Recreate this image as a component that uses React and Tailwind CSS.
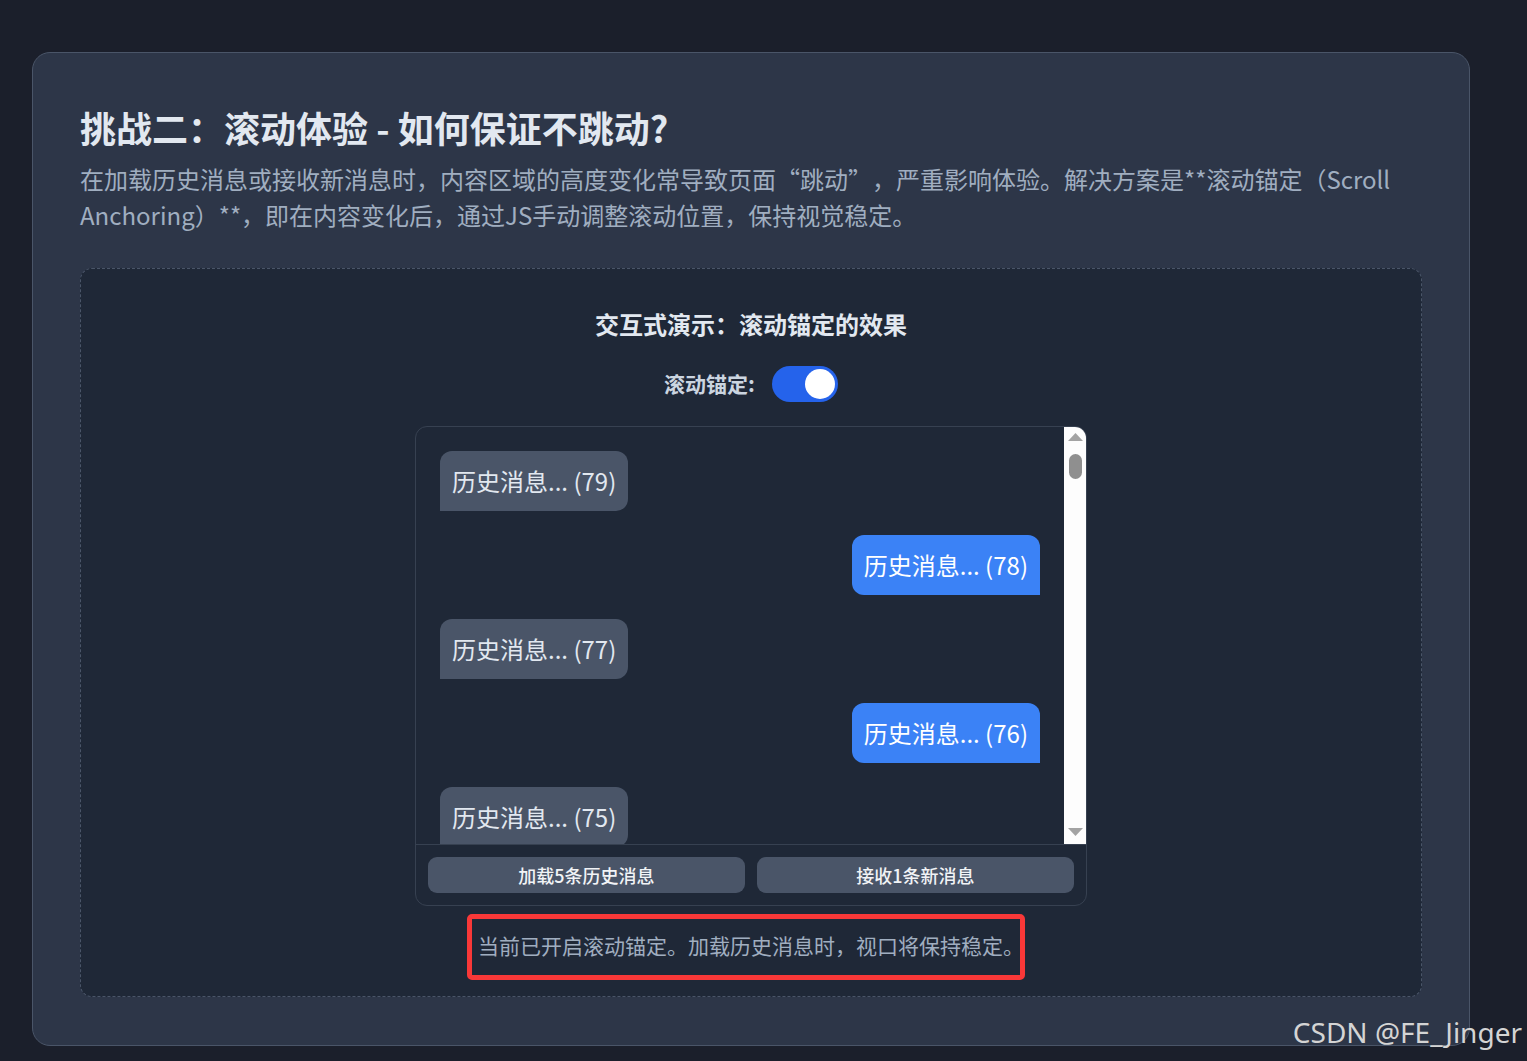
import React, { useState } from 'react';

const messages = [79, 78, 77, 76, 75];

function Bubble({ n }) {
  const mine = n % 2 === 0;
  return (
    <div className={mine ? 'flex justify-end' : 'flex justify-start'}>
      <div
        className={
          mine
            ? 'bg-[#3b82f6] text-white text-[24px] leading-[36px] px-3 py-3 rounded-[12px] rounded-br-none'
            : 'bg-[#4a5568] text-[#e2e8f0] text-[24px] leading-[36px] px-3 py-3 rounded-[12px] rounded-bl-none'
        }
      >
        历史消息... ({n})
      </div>
    </div>
  );
}

function FakeScrollbar() {
  return (
    <div className="w-[22px] shrink-0 bg-[#fdfdfd] flex flex-col items-center pt-[6px] pb-[8px]">
      <svg width="15" height="8" viewBox="0 0 15 8">
        <polygon points="7.5,0 15,8 0,8" fill="#a3a3a3" />
      </svg>
      <div className="mt-[13px] w-[13px] h-[25px] rounded-full bg-[#8f8f8f]" />
      <div className="flex-1" />
      <svg width="15" height="8" viewBox="0 0 15 8">
        <polygon points="0,0 15,0 7.5,8" fill="#a3a3a3" />
      </svg>
    </div>
  );
}

export default function App() {
  const [anchored, setAnchored] = useState(true);

  return (
    <div
      className="relative h-[1061px] bg-[#1b1f2b] pt-[52px] pl-[32px] pr-[57px] overflow-hidden [text-spacing-trim:space-all]"
      style={{ fontFamily: '"Noto Sans CJK SC", "Noto Sans", sans-serif' }}
    >
      <div className="bg-[#2d3648] border border-[#4a5568] rounded-[18px] px-[47px] pt-[50px] pb-[48px]">
        <h2 className="text-[36px] leading-[48px] font-bold text-[#e2e8f0]">
          挑战二：滚动体验 - 如何保证不跳动?
        </h2>
        <p className="mt-[10px] text-[24px] leading-[36px] text-[#a0aec0]">
          在加载历史消息或接收新消息时，内容区域的高度变化常导致页面“跳动”，严重影响体验。解决方案是**滚动锚定（Scroll Anchoring）**，即在内容变化后，通过JS手动调整滚动位置，保持视觉稳定。
        </p>

        <div className="mt-[35px] bg-[#1f2837] border border-dashed border-[#4a5568] rounded-[12px] pt-[37px] pb-[35px] flex flex-col items-center">
          <h3 className="text-[24px] leading-[36px] font-bold text-[#e2e8f0]">
            交互式演示：滚动锚定的效果
          </h3>

          <div className="mt-[24px] flex items-center gap-[17px]">
            <span className="text-[21px] font-semibold text-[#cbd5e0]">滚动锚定:</span>
            <button
              onClick={() => setAnchored(!anchored)}
              className={
                anchored
                  ? 'w-[66px] h-[36px] rounded-full bg-[#2563eb] flex items-center justify-end pr-[3px]'
                  : 'w-[66px] h-[36px] rounded-full bg-[#4a5568] flex items-center justify-start pl-[3px]'
              }
            >
              <span className="w-[30px] h-[30px] rounded-full bg-white block" />
            </button>
          </div>

          <div className="mt-[24px] w-[672px] border border-[#374151] rounded-[12px] overflow-hidden">
            <div className="h-[417px] flex">
              <div className="flex-1 overflow-hidden p-6 flex flex-col gap-6">
                {messages.map((n) => (
                  <Bubble key={n} n={n} />
                ))}
              </div>
              <FakeScrollbar />
            </div>
            <div className="border-t border-[#374151] p-3 flex gap-3">
              <button className="flex-1 h-[36px] rounded-[9px] bg-[#4a5568] text-[18px] leading-[24px] font-medium text-[#f1f3f6]">
                加载5条历史消息
              </button>
              <button className="flex-1 h-[36px] rounded-[9px] bg-[#4a5568] text-[18px] leading-[24px] font-medium text-[#f1f3f6]">
                接收1条新消息
              </button>
            </div>
          </div>

          <div className="mt-[24px] relative">
            <span className="absolute left-[-11px] right-[-1px] top-[-16px] bottom-[-19px] border-[5px] border-[#f93838] rounded-[5px]" />
            <p className="text-[21px] leading-[31px] text-[#a0aec0]">
              {anchored
                ? '当前已开启滚动锚定。加载历史消息时，视口将保持稳定。'
                : '当前已关闭滚动锚定。加载历史消息时，视口将发生跳动。'}
            </p>
          </div>
        </div>
      </div>

      <span
        className="absolute right-[5px] bottom-[15px] text-[28px] leading-none text-[#d4d4d4]"
        style={{ fontFamily: '"Noto Sans", sans-serif' }}
      >
        CSDN @FE_Jinger
      </span>
    </div>
  );
}
